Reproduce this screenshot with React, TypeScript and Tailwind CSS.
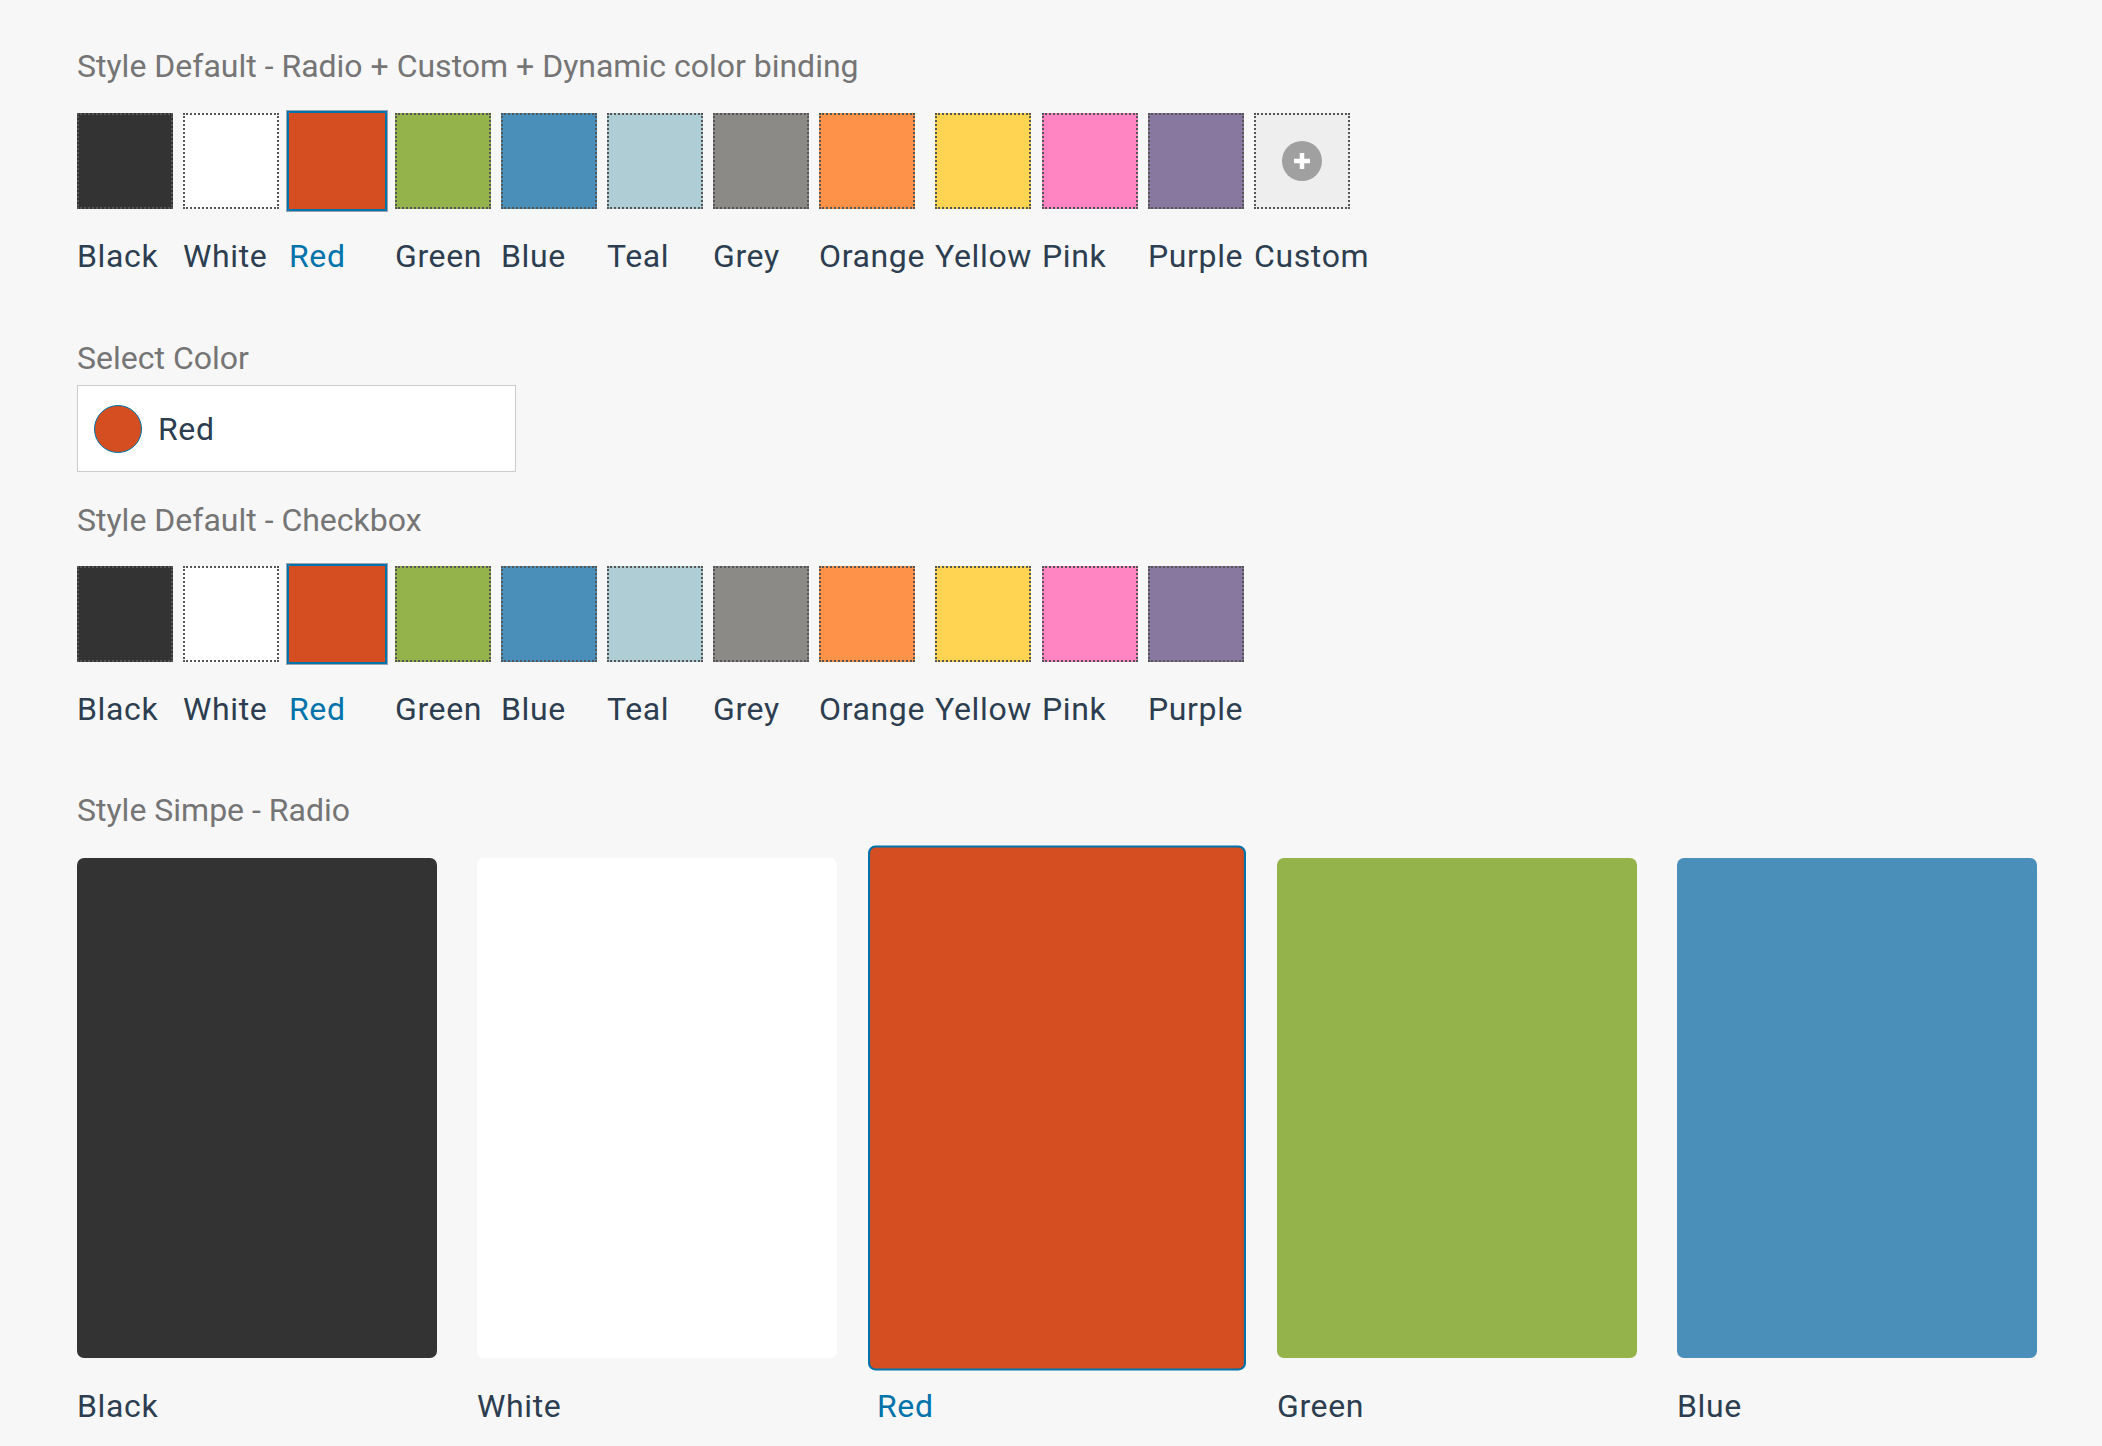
import React, { useState } from 'react';

type Swatch = { name: string; bg: string };

const PALETTE: Swatch[] = [
  { name: 'Black', bg: 'bg-[#333333]' },
  { name: 'White', bg: 'bg-[#ffffff]' },
  { name: 'Red', bg: 'bg-[#d54e21]' },
  { name: 'Green', bg: 'bg-[#94b44b]' },
  { name: 'Blue', bg: 'bg-[#4a8fb9]' },
  { name: 'Teal', bg: 'bg-[#aecdd5]' },
  { name: 'Grey', bg: 'bg-[#8b8a87]' },
  { name: 'Orange', bg: 'bg-[#ff9249]' },
  { name: 'Yellow', bg: 'bg-[#ffd452]' },
  { name: 'Pink', bg: 'bg-[#ff85c2]' },
  { name: 'Purple', bg: 'bg-[#88789f]' },
];

const TITLE = "leading-[48px] text-[#757575]";
const LABEL = "leading-[48px] tracking-[0.02em]";

const SwatchItem = ({ color, selected, onPick }: { color: Swatch; selected: boolean; onPick: () => void }) => (
  <button onClick={onPick} className="flex cursor-pointer flex-col items-start gap-[23px]">
    <span
      className={`block h-[96px] w-[96px] ${color.bg} ${
        selected ? 'shadow-[0_0_0_2px_#0073aa,0_0_0_3px_#9aa5b1]' : 'border-2 border-dotted border-[#555555]'
      }`}
    />
    <span className={`${LABEL} ${selected ? 'text-[#0073aa]' : 'text-[#2c3e50]'}`}>{color.name}</span>
  </button>
);

const PlusCircle = () => (
  <svg width="40" height="40" viewBox="0 0 40 40">
    <circle cx="20" cy="20" r="20" fill="#a0a0a0" />
    <rect x="12" y="17.75" width="16" height="4.5" fill="#ffffff" />
    <rect x="17.75" y="12" width="4.5" height="16" fill="#ffffff" />
  </svg>
);

export default function App() {
  const [radio, setRadio] = useState('Red');
  const [checked, setChecked] = useState<string[]>(['Red']);
  const [simple, setSimple] = useState('Red');

  const toggle = (name: string) =>
    setChecked(prev => (prev.includes(name) ? prev.filter(n => n !== name) : [...prev, name]));

  const current = PALETTE.find(c => c.name === radio) || PALETTE[2];

  return (
    <div className="min-h-screen bg-[#f7f7f7] pl-[77px] pr-[65px] pt-[42px] font-[Roboto,sans-serif] text-[32px]">
      {/* Radio + custom */}
      <div className={TITLE}>Style Default - Radio + Custom + Dynamic color binding</div>
      <div className="mt-[23px] flex items-start gap-[10px]">
        {PALETTE.map(c => (
          <SwatchItem key={c.name} color={c} selected={radio === c.name} onPick={() => setRadio(c.name)} />
        ))}
        <button className="flex cursor-pointer flex-col items-start gap-[23px]">
          <span className="flex h-[96px] w-[96px] items-center justify-center border-2 border-dotted border-[#555555] bg-[#eeeeee]">
            <PlusCircle />
          </span>
          <span className={`${LABEL} text-[#2c3e50]`}>Custom</span>
        </button>
      </div>

      {/* Select */}
      <div className={`mt-[54px] ${TITLE}`}>Select Color</div>
      <div className="mt-[3px] flex h-[87px] w-[439px] items-center gap-[16px] border-[1.5px] border-[#cccccc] bg-white pl-[16px]">
        <span className={`h-[48px] w-[48px] rounded-full border-[1.5px] border-[#0073aa] ${current.bg}`} />
        <span className={`${LABEL} text-[#2c3e50]`}>{current.name}</span>
      </div>

      {/* Checkbox */}
      <div className={`mt-[24px] ${TITLE}`}>Style Default - Checkbox</div>
      <div className="mt-[22px] flex items-start gap-[10px]">
        {PALETTE.map(c => (
          <SwatchItem key={c.name} color={c} selected={checked.includes(c.name)} onPick={() => toggle(c.name)} />
        ))}
      </div>

      {/* Simple radio */}
      <div className={`mt-[53px] ${TITLE}`}>Style Simpe - Radio</div>
      <div className="mt-[24px] grid grid-cols-5 gap-[40px]">
        {PALETTE.slice(0, 5).map(c => {
          const on = simple === c.name;
          return (
            <button key={c.name} onClick={() => setSimple(c.name)} className="flex cursor-pointer flex-col items-start gap-[24px]">
              <span
                className={`block h-[500px] w-full rounded-[7px] ${c.bg} ${on ? 'scale-105 border-2 border-[#0073aa]' : ''}`}
              />
              <span className={`${LABEL} ${on ? 'text-[#0073aa]' : 'text-[#2c3e50]'}`}>{c.name}</span>
            </button>
          );
        })}
      </div>
    </div>
  );
}
